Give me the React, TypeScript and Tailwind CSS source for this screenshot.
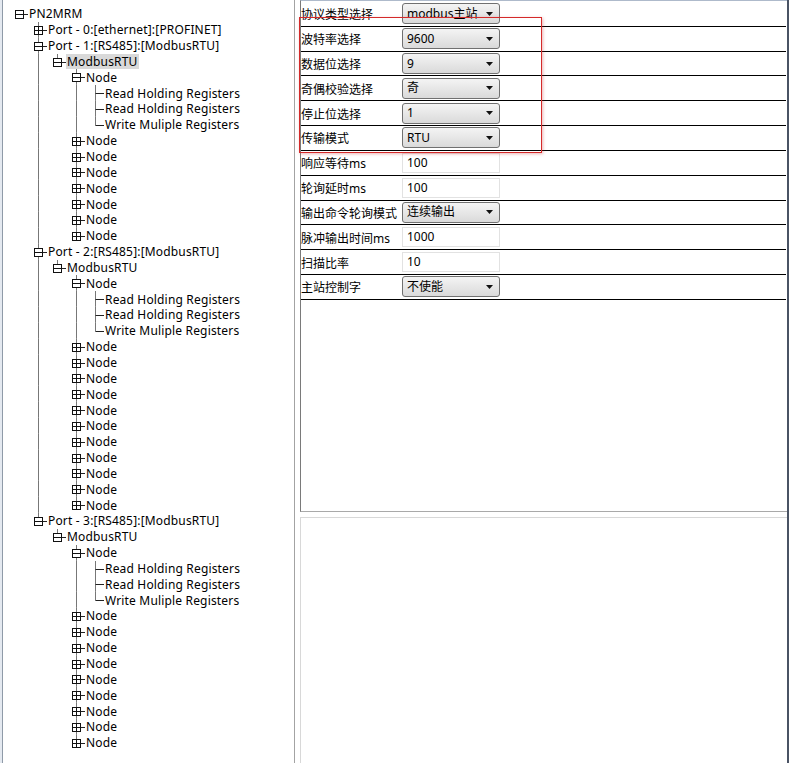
import React from 'react'

type TreeNode = {
  label: string
  children?: TreeNode[]
  expanded?: boolean
  selected?: boolean
}

type Row = {
  node: TreeNode
  depth: number
  isLast: boolean
  ancestorMore: boolean[] // index = depth, true when that ancestor has a sibling below
}

const ROW_H = 15.85

const registers = (): TreeNode[] => [
  { label: 'Read Holding Registers' },
  { label: 'Read Holding Registers' },
  { label: 'Write Muliple Registers' },
]

const collapsedNode = (): TreeNode => ({ label: 'Node', children: [{ label: '' }] })

const port = (n: number, extraNodes: number, selected = false): TreeNode => ({
  label: `Port - ${n}:[RS485]:[ModbusRTU]`,
  expanded: true,
  children: [
    {
      label: 'ModbusRTU',
      selected,
      expanded: true,
      children: [
        { label: 'Node', expanded: true, children: registers() },
        ...Array.from({ length: extraNodes }, collapsedNode),
      ],
    },
  ],
})

const tree: TreeNode = {
  label: 'PN2MRM',
  expanded: true,
  children: [
    { label: 'Port - 0:[ethernet]:[PROFINET]', children: [{ label: '' }] },
    port(1, 7, true),
    port(2, 11),
    port(3, 9),
  ],
}

function flatten(node: TreeNode, depth: number, isLast: boolean, ancestorMore: boolean[], out: Row[]) {
  out.push({ node, depth, isLast, ancestorMore })
  if (node.expanded && node.children) {
    const more = [...ancestorMore]
    more[depth] = !isLast
    node.children.forEach((c, i) => flatten(c, depth + 1, i === node.children!.length - 1, more, out))
  }
}

const rows: Row[] = []
flatten(tree, 0, true, [], rows)

function TreeRow({ row }: { row: Row }) {
  const { node, depth, isLast, ancestorMore } = row
  const w = 25 + 19 * depth
  const cy = ROW_H / 2
  const lx = (d: number) => 12 + 19 * d + 4.5
  const hasKids = !!node.children
  const bx = 12 + 19 * depth
  const my = Math.round(cy) + 0.5

  return (
    <div className="flex items-center" style={{ height: ROW_H }}>
      <svg width={w} height={ROW_H} className="shrink-0">
        {ancestorMore.map((more, l) =>
          l >= 1 && l < depth && more ? (
            <line key={l} x1={lx(l)} y1={0} x2={lx(l)} y2={ROW_H} stroke="#777" strokeWidth={1} />
          ) : null
        )}
        {depth >= 1 && (
          <line x1={lx(depth)} y1={0} x2={lx(depth)} y2={isLast ? my : ROW_H} stroke="#777" strokeWidth={1} />
        )}
        <line x1={hasKids ? bx + 8 : lx(depth)} y1={my} x2={w} y2={my} stroke="#222" strokeWidth={1} />
        {hasKids && (
          <g>
            <rect x={bx + 0.5} y={my - 4} width={8} height={8} fill="#fff" stroke="#111" strokeWidth={1} />
            <line x1={bx} y1={my} x2={bx + 9} y2={my} stroke="#111" strokeWidth={1} />
            {!node.expanded && (
              <line x1={bx + 4.5} y1={my - 4.5} x2={bx + 4.5} y2={my + 4.5} stroke="#111" strokeWidth={1} />
            )}
          </g>
        )}
      </svg>
      <span
        className={
          'px-[1px] leading-[15px] whitespace-nowrap text-[12px] tracking-[0.17px] text-black ' +
          (node.selected ? 'bg-[#d9d9d9]' : '')
        }
      >
        {node.label}
      </span>
    </div>
  )
}

function Arrow() {
  return (
    <svg width="7" height="4" viewBox="0 0 7 4" className="shrink-0">
      <polygon points="0,0 7,0 3.5,4" fill="#111" />
    </svg>
  )
}

function Combo({ value }: { value: string }) {
  return (
    <div className="ml-[1px] flex h-[21px] w-[98px] items-center justify-between rounded-[3px] border border-[#707070] bg-gradient-to-b from-[#f4f4f4] to-[#dadada] pl-[4px] pr-[6px] text-[12px] text-black">
      <span className="whitespace-nowrap">{value}</span>
      <Arrow />
    </div>
  )
}

function TextBox({ value }: { value: string }) {
  return (
    <div className="ml-[1px] flex h-[20px] w-[98px] items-center border border-[#e2e2e2] bg-white pl-[4px] text-[12px] text-black">
      {value}
    </div>
  )
}

const props: { label: string; combo?: string; input?: string }[] = [
  { label: '协议类型选择', combo: 'modbus主站' },
  { label: '波特率选择', combo: '9600' },
  { label: '数据位选择', combo: '9' },
  { label: '奇偶校验选择', combo: '奇' },
  { label: '停止位选择', combo: '1' },
  { label: '传输模式', combo: 'RTU' },
  { label: '响应等待ms', input: '100' },
  { label: '轮询延时ms', input: '100' },
  { label: '输出命令轮询模式', combo: '连续输出' },
  { label: '脉冲输出时间ms', input: '1000' },
  { label: '扫描比率', input: '10' },
  { label: '主站控制字', combo: '不使能' },
]

export default function App() {
  return (
    <div className="relative flex h-[763px] w-[789px] overflow-hidden bg-[#e4e9f0] pl-[2px] font-['Noto_Sans','Noto_Sans_CJK_SC',sans-serif]">
      {/* Tree */}
      <div className="h-full w-[293px] border-l border-r border-l-[#8f9aa8] border-r-[#a3a3a3] bg-white pt-[6px]">
        {rows.map((r, i) => (
          <TreeRow key={i} row={r} />
        ))}
      </div>

      {/* Right side */}
      <div className="flex h-full flex-1 flex-col border-r-2 border-[#4a5364] bg-white pl-[5px]">
        <div className="flex h-[512px] flex-col border-l border-t border-b border-l-[#7a7a7a] border-t-[#aebacb] border-b-[#a9a9a9] pt-[1px]">
          {props.map((p, i) => (
            <div key={i} className="mr-[1px] flex h-[24.82px] shrink-0 items-center border-b border-black">
              <div className="w-[100px] whitespace-nowrap pt-[3px] text-[12px] leading-none text-black">{p.label}</div>
              {p.combo !== undefined ? <Combo value={p.combo} /> : <TextBox value={p.input!} />}
            </div>
          ))}
        </div>
        <div className="mt-[5px] flex-1 border-l border-t border-[#d8d8d8]" />
      </div>

      {/* red highlight box */}
      <div className="pointer-events-none absolute left-[299px] top-[17px] h-[136px] w-[243px] border-[1.5px] border-[#d42a2a] shadow-[1px_1px_3px_rgba(200,40,40,0.35)]" />
    </div>
  )
}
